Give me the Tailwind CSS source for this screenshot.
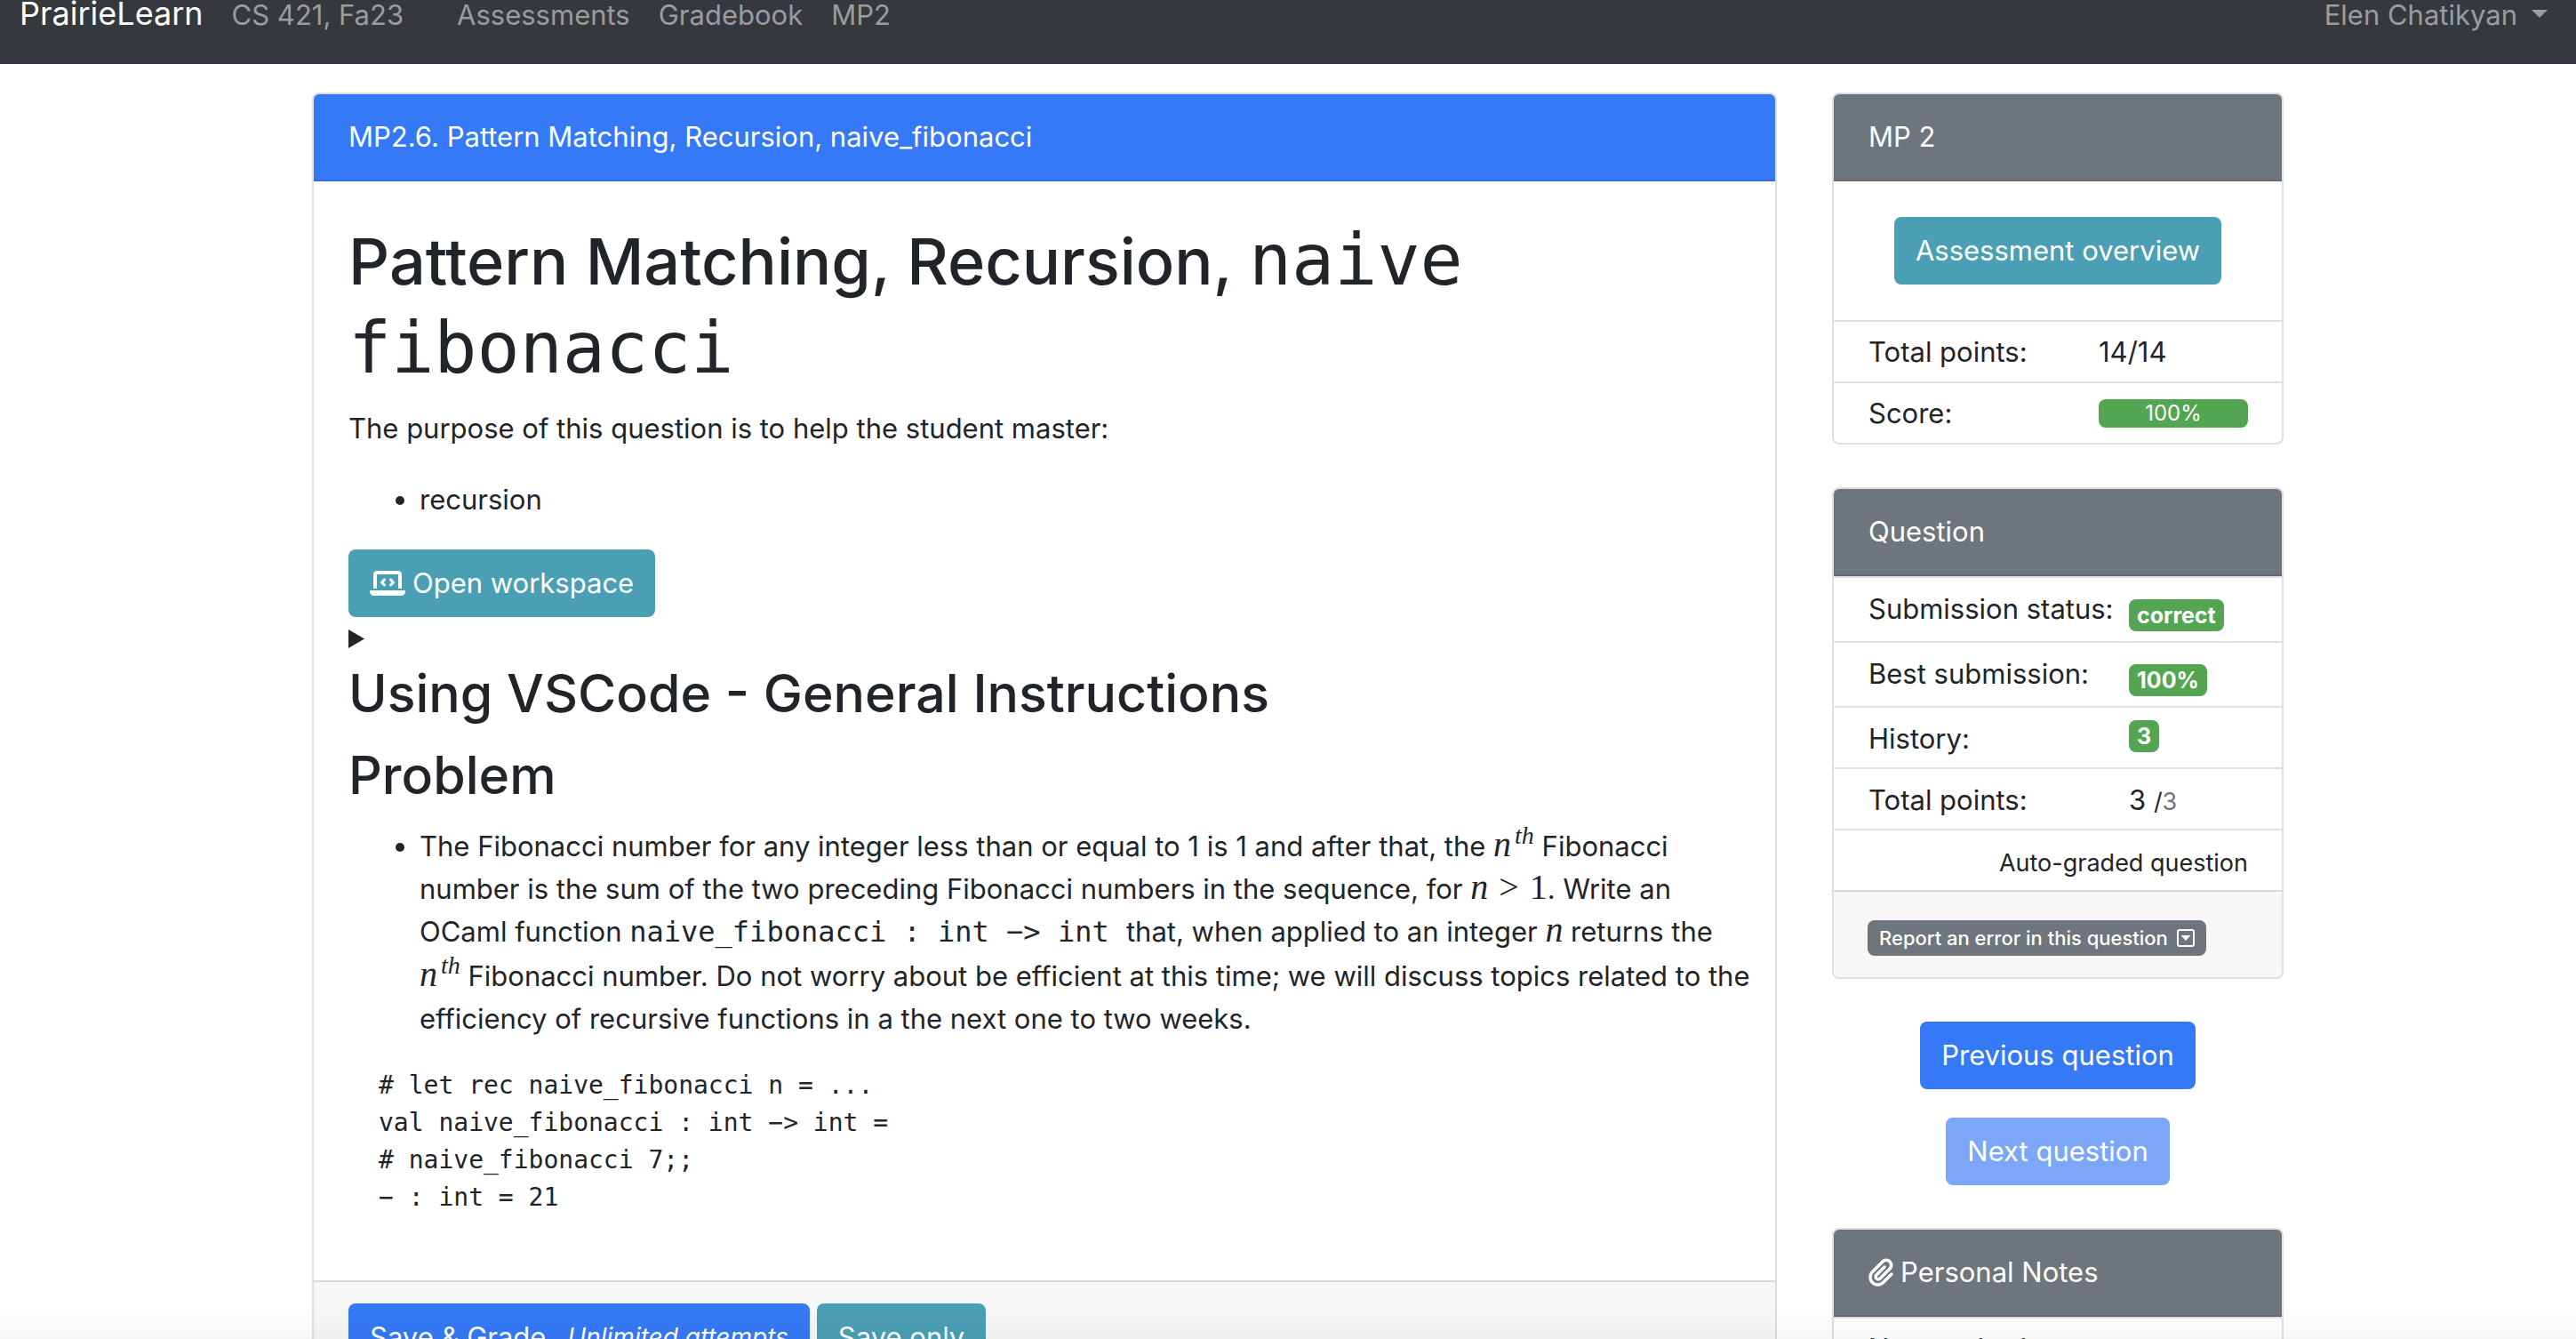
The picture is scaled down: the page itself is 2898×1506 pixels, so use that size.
<!DOCTYPE html>
<html lang="en">
<head>
<meta charset="utf-8">
<title>PrairieLearn</title>
<script src="https://cdn.jsdelivr.net/npm/@tailwindcss/browser@4"></script>
</head>
<body class="h-screen overflow-hidden bg-white font-['Inter',sans-serif] text-[31px] leading-[48px] text-[#212529]">

<nav class="flex h-[72px] items-start bg-[#35393d] px-[22px] leading-[34px] text-[#9a9c9e]">
  <a href="#" class="mr-8 text-[36px] leading-[30px] text-white">PrairieLearn</a>
  <a href="#" class="mr-15">CS 421, Fa23</a>
  <a href="#" class="mr-8">Assessments</a>
  <a href="#" class="mr-8">Gradebook</a>
  <a href="#">MP2</a>
  <button type="button" class="mr-2.5 ml-auto flex items-center gap-4">Elen Chatikyan
    <svg class="mb-1 h-[9px] w-[18px]" viewBox="0 0 18 9" fill="currentColor"><path d="M0 0h18L9 9z"/></svg>
  </button>
</nav>

<div class="mx-auto flex max-w-[2240px] items-start gap-[62px] pt-8 pl-[22px]">

  <main class="min-w-0 flex-1 overflow-hidden rounded-lg border-2 border-[#dfdfdf]">
    <div class="border-b-2 border-[#2f6cdc] bg-[#3579f6] px-[39px] py-6 text-white">MP2.6. Pattern Matching, Recursion, naive_fibonacci</div>
    <div class="px-[39px] pt-10 pb-[72px]">
      <h1 class="mb-4 text-[72px] leading-[99px] font-medium">Pattern Matching, Recursion, <code class="font-['DejaVu_Sans_Mono',monospace] text-[80px] leading-20 font-normal">naive<br>fibonacci</code></h1>
      <p class="mb-8">The purpose of this question is to help the student master:</p>
      <ul class="mb-8 list-disc pl-20"><li>recursion</li></ul>
      <a href="#" class="flex h-[76px] w-fit items-center gap-2 rounded-lg bg-[#4b9fb5] px-6 text-white">
        <svg class="h-8 w-10" viewBox="0 0 640 512" fill="currentColor"><path d="M64 96c0-35.3 28.7-64 64-64H512c35.3 0 64 28.7 64 64V352H512V96H128V352H64V96zM0 403.2C0 392.6 8.6 384 19.2 384H620.8c10.6 0 19.2 8.6 19.2 19.2c0 42.4-34.4 76.8-76.8 76.8H76.8C34.4 480 0 445.6 0 403.2zM281 209l-31 31 31 31c9.4 9.4 9.4 24.6 0 33.9s-24.6 9.4-33.9 0l-48-48c-9.4-9.4-9.4-24.6 0-33.9l48-48c9.4-9.4 24.6-9.4 33.9 0s9.4 24.6 0 33.9zM393 175l48 48c9.4 9.4 9.4 24.6 0 33.9l-48 48c-9.4 9.4-24.6 9.4-33.9 0s-9.4-24.6 0-33.9l31-31-31-31c-9.4-9.4-9.4-24.6 0-33.9s24.6-9.4 33.9 0z"/></svg>
        Open workspace
      </a>
      <details>
        <summary class="list-none">
          <span class="flex h-12 items-center"><svg class="h-[21px] w-[18px]" viewBox="0 0 18 21" fill="currentColor"><path d="M0 0v21l18-10.500z"/></svg></span>
          <h2 class="mb-4 text-[59px] leading-[76px] font-medium">Using VSCode - General Instructions</h2>
        </summary>
      </details>
      <h2 class="mb-4 text-[59px] leading-[76px] font-medium">Problem</h2>
      <ul class="mb-[30px] list-disc pl-20 whitespace-nowrap">
        <li>The Fibonacci number for any integer less than or equal to 1 is 1 and after that, the <span class="font-['Liberation_Serif',serif] text-[40px] leading-8 italic">n<sup class="static pl-1 align-[14px] text-[28px] leading-7">th</sup></span> Fibonacci<br>
        number is the sum of the two preceding Fibonacci numbers in the sequence, for <span class="font-['Liberation_Serif',serif] text-[40px] leading-8"><i>n</i> <span class="mx-0.5">&gt;</span> 1</span>. Write an<br>
        OCaml function <code class="font-['DejaVu_Sans_Mono',monospace] text-[32px] leading-8 whitespace-pre">naive_fibonacci : int −&gt; int </code>that, when applied to an integer <i class="font-['Liberation_Serif',serif] text-[40px] leading-8">n</i> returns the<br>
        <span class="font-['Liberation_Serif',serif] text-[40px] leading-8 italic">n<sup class="static pl-1 align-[14px] text-[28px] leading-7">th</sup></span> Fibonacci number. Do not worry about be efficient at this time; we will discuss topics related to the<br>
        efficiency of recursive functions in a the next one to two weeks.</li>
      </ul>
      <pre class="px-[34px] font-['DejaVu_Sans_Mono',monospace] text-[28px] leading-[42px]"># let rec naive_fibonacci n = ...
val naive_fibonacci : int −&gt; int =
# naive_fibonacci 7;;
− : int = 21</pre>
    </div>
    <div class="flex gap-2 border-t-2 border-[#d9d9d9] bg-[#f7f7f7] px-[39px] py-6 text-white">
      <button type="submit" class="flex h-[76px] items-center gap-6 rounded-lg bg-[#3579f6] px-6">Save &amp; Grade <i class="text-[28px]">Unlimited attempts</i></button>
      <button type="submit" class="h-[76px] rounded-lg bg-[#4b9fb5] px-6">Save only</button>
    </div>
  </main>

  <aside class="flex w-[508px] shrink-0 flex-col">
    <section class="mb-12 overflow-hidden rounded-lg border-2 border-[#dfdfdf]">
      <h2 class="border-b-2 border-[#60676e] bg-[#6e757d] px-[39px] py-6 text-white">MP 2</h2>
      <div class="flex justify-center py-10">
        <a href="#" class="flex h-[76px] items-center rounded-lg bg-[#4b9fb5] px-6 text-white">Assessment overview</a>
      </div>
      <table class="w-full border-separate border-spacing-0">
        <tr class="h-[69px]"><td class="w-[298px] border-t-2 border-[#dee2e6] pl-[39px]">Total points:</td><td class="border-t-2 border-[#dee2e6]">14/14</td></tr>
        <tr class="h-[69px]"><td class="border-t-2 border-[#dee2e6] pl-[39px]">Score:</td><td class="border-t-2 border-[#dee2e6] pr-[38px]"><div class="h-8 rounded-lg bg-[#54a551] text-center text-[24px] leading-8 text-white">100%</div></td></tr>
      </table>
    </section>

    <section class="mb-12 overflow-hidden rounded-lg border-2 border-[#dfdfdf]">
      <h2 class="border-b-2 border-[#60676e] bg-[#6e757d] px-[39px] py-6 text-white">Question</h2>
      <table class="w-full border-separate border-spacing-0 whitespace-nowrap">
        <tr class="h-[73px] align-top"><td class="w-[332px] border-t-2 border-[#dee2e6] pt-[11px] pl-[39px]">Submission status:</td><td class="border-t-2 border-[#dee2e6] pt-6"><span class="block h-9 w-fit rounded-lg bg-[#54a551] px-[9px] text-[25px] leading-9 font-bold text-white">correct</span></td></tr>
        <tr class="h-[73px] align-top"><td class="border-t-2 border-[#dee2e6] pt-[11px] pl-[39px]">Best submission:</td><td class="border-t-2 border-[#dee2e6] pt-6"><span class="block h-9 w-fit rounded-lg bg-[#54a551] px-[9px] text-[25px] leading-9 font-bold text-white">100%</span></td></tr>
        <tr class="h-[69px] align-top"><td class="border-t-2 border-[#dee2e6] pt-[11px] pl-[39px]">History:</td><td class="border-t-2 border-[#dee2e6] pt-[14px]"><a href="#" class="block h-9 w-fit rounded-lg bg-[#54a551] px-[9px] text-[25px] leading-9 font-bold text-white">3</a></td></tr>
        <tr class="h-[69px] align-top"><td class="border-t-2 border-[#dee2e6] pt-[11px] pl-[39px]">Total points:</td><td class="border-t-2 border-[#dee2e6] pt-[11px]">3 <span class="text-[27px]">/<span class="text-[#6c757d]">3</span></span></td></tr>
        <tr class="h-[69px]"><td colspan="2" class="border-t-2 border-[#dee2e6] pt-1.5 pr-[38px] text-right text-[27px]">Auto-graded question</td></tr>
      </table>
      <div class="border-t-2 border-[#d9d9d9] bg-[#f7f7f7] px-[38px] pt-8 pb-6">
        <button type="button" class="flex h-10 items-center gap-2.5 rounded-lg bg-[#6e757d] px-[13px] text-[22px] font-medium whitespace-nowrap text-white">Report an error in this question
          <svg class="size-5" viewBox="0 0 20 20" fill="none"><rect x="1" y="1" width="18" height="18" rx="2" stroke="currentColor" stroke-width="2"/><path d="M4.500 7h11L10 13z" fill="currentColor"/></svg>
        </button>
      </div>
    </section>

    <div class="mb-12 flex flex-col items-center gap-8 text-white">
      <a href="#" class="flex h-[76px] items-center rounded-lg bg-[#3579f6] px-6">Previous question</a>
      <button type="button" disabled class="h-[76px] rounded-lg bg-[#7ca7f9] px-6">Next question</button>
    </div>

    <section class="overflow-hidden rounded-lg border-2 border-[#dfdfdf]">
      <h2 class="flex items-center gap-2 border-b-2 border-[#60676e] bg-[#6e757d] px-[39px] py-6 text-white">
        <svg class="h-8 w-7" viewBox="0 0 448 512" fill="currentColor"><path d="M364.200 83.800c-24.400-24.400-64-24.400-88.400 0l-184 184c-42.100 42.100-42.100 110.300 0 152.400s110.300 42.100 152.400 0l152-152c10.900-10.900 28.700-10.900 39.600 0s10.900 28.700 0 39.600l-152 152c-64 64-167.600 64-231.600 0s-64-167.600 0-231.600l184-184c46.300-46.300 121.300-46.300 167.600 0s46.300 121.300 0 167.600l-176 176c-28.600 28.600-75 28.600-103.600 0s-28.600-75 0-103.600l144-144c10.900-10.900 28.700-10.900 39.600 0s10.900 28.700 0 39.600l-144 144c-6.700 6.700-6.700 17.700 0 24.400s17.700 6.700 24.400 0l176-176c24.400-24.400 24.400-64 0-88.400z"/></svg>
        Personal Notes
      </h2>
      <p class="border-t-2 border-[#dee2e6] px-[39px] py-2.5">No attached notes</p>
    </section>
  </aside>
</div>

<div class="pointer-events-none fixed inset-x-0 bottom-0 h-9 bg-linear-to-b from-transparent to-black/3"></div>
</body>
</html>
